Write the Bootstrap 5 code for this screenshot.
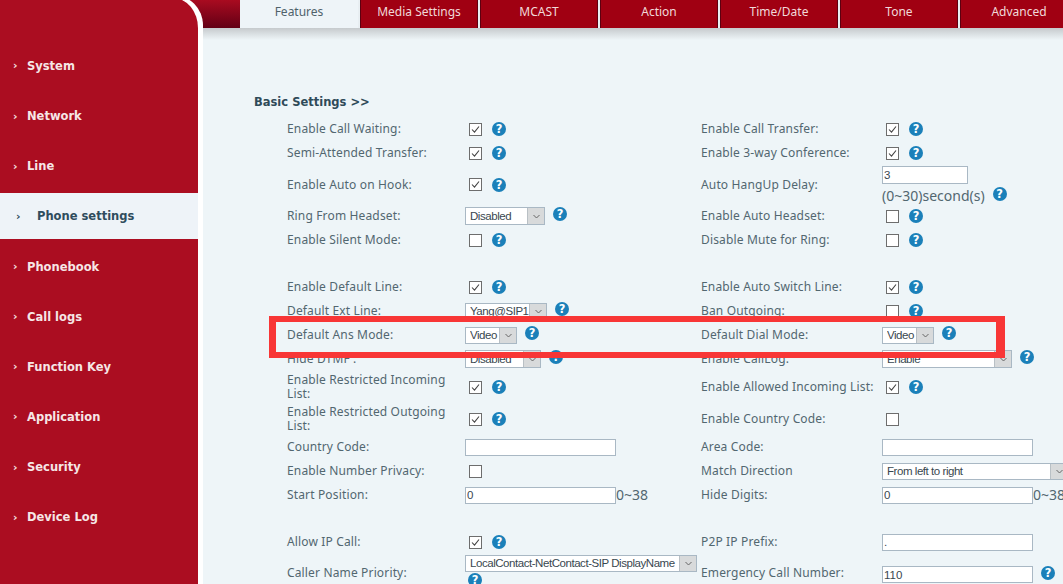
<!DOCTYPE html>
<html lang="en">
<head>
  <meta charset="UTF-8">
  <meta name="viewport" content="width=device-width, initial-scale=1">
  <title>Phone settings</title>
  <link href="https://cdn.jsdelivr.net/npm/bootstrap@5.3.0/dist/css/bootstrap.min.css" rel="stylesheet">
  <style>
    html, body { height: 584px; overflow: hidden; }
    body { font-family: "Noto Sans", "Liberation Sans", sans-serif; font-size: 12px; color: #526770; background: #eef5f8; }
    .page-wrap { width: 1063px; height: 584px; position: relative; overflow: hidden; }

    /* sidebar */
    .side-bar { width: 203px; height: 590px; margin-top: -2px; background: #ab0d21; border-right: 5px solid #fff; border-top-right-radius: 30px; position: relative; z-index: 2; padding-top: 42px; box-shadow: 0 -3px 0 #fff; }
    .side-item { height: 50.2px; display: flex; align-items: center; padding: 3px 0 0 13px; color: #f6e6e6; font-family: "DejaVu Sans", sans-serif; font-weight: 700; font-size: 11.5px; text-decoration: none; }
    .side-item .chev { width: 14px; font-size: 11px; }
    .side-item.on { background: #eef3f8; color: #2f4c5d; height: 46px; margin: 2px 0; padding-left: 16px; }
    .side-item.on .chev { width: 21px; }

    /* top tabs */
    .main-col { width: 890px; margin-left: -30px; flex: none; }
    .tab-bar { height: 28px; padding-left: 67px; background: linear-gradient(#a90b20, #630015); }
    .tab-strip { gap: 2px; background: #e8eef2; flex: none; }
    .tab-cell { width: 118px; flex: none; height: 28px; line-height: 24px; text-align: center; background: #a00012; color: #f1d9d9; border-left: 1px solid #5e0010; border-right: 1px solid #5e0010; text-decoration: none; }
    .tab-cell.on { background: #eef4f8; color: #4f626b; border: 0; }
    .shade-bar { height: 12px; margin-left: 30px; background: linear-gradient(#c6cacd, #eef5f8); }

    /* settings */
    .set-area { margin-left: 30px; padding-top: 53px; }
    .set-title { margin-left: 51px; height: 24px; line-height: 18px; font-family: "DejaVu Sans", sans-serif; font-weight: 700; font-size: 11.5px; color: #2f4a58; }
    .set-row { height: 24px; margin-left: 84px; }
    .row-39 { height: 39px; }
    .row-32 { height: 32px; }
    .row-40 { height: 40px; }
    .set-gap { height: 23px; }
    .set-left { width: 414px; flex: none; }
    .set-label { width: 178px; flex: none; line-height: 14px; letter-spacing: .15px; }
    .set-right .set-label { width: 181px; }
    .set-ctl { flex: none; white-space: nowrap; }
    .note-txt { font-size: 14px; line-height: 16px; }
    .note-line { margin-top: 4px; }
    .top-1 { margin-top: 1px; }

    .chk-box.form-check-input { width: 13px; height: 13px; margin: 0 0 0 4px; border: 1px solid #6d6d6d; border-radius: 0; background-color: #fff; flex: none; }
    .chk-box.form-check-input:checked { background-color: #fff; border-color: #6d6d6d; background-image: url("data:image/svg+xml,%3csvg xmlns='http://www.w3.org/2000/svg' viewBox='0 0 13 13'%3e%3cpath fill='none' stroke='%23444' stroke-width='1.1' d='M3 6.5l2.5 2.7L10 3.5'/%3e%3c/svg%3e"); background-size: 13px 13px; }
    .help-dot { width: 14px; height: 14px; border-radius: 50%; background: #1b80b9; color: #fff; font: 700 11.5px/14px "DejaVu Sans", sans-serif; text-align: center; flex: none; margin-left: 10px; }
    .help-up { margin-top: -4px; margin-left: 8px; }
    .help-under { display: block; margin: 1px 0 0 3px; }

    .sel-box { height: 17px; border: 1px solid #a9b8c4; background: #fff; display: flex; flex: none; }
    .sel-tall { height: 18px; }
    .sel-box select { flex: 1; min-width: 0; appearance: none; border: 0; outline: 0; background: transparent; padding: 0 0 0 4px; font: 11.5px/15px "Liberation Sans", sans-serif; letter-spacing: -.45px; color: #39474f; }
    .sel-arrow { width: 17px; flex: none; background: #d8dadb; border-left: 1px solid #b9c0c5; display: flex; align-items: center; justify-content: center; }
    .w-52 { width: 52px; }
    .w-76 { width: 76px; }
    .w-80 { width: 80px; }
    .w-82 { width: 82px; }
    .w-130 { width: 130px; }
    .w-232 { width: 232px; }
    .w-186 { width: 186px; }

    .txt-in.form-control { width: 151px; height: 17px; min-height: 0; padding: 0 1px; border: 1px solid #a9b8c4; border-radius: 0; background: #fff; font: 11.5px/15px "Liberation Sans", sans-serif; color: #39474f; box-shadow: none; flex: none; }
    .txt-short.form-control { width: 86px; height: 18px; }

    .red-mark { position: absolute; left: 269px; top: 316px; width: 736px; height: 42px; border: 6px solid #f83636; border-left-width: 7px; border-right-width: 9px; z-index: 3; pointer-events: none; }
  </style>
</head>
<body>
  <div class="page-wrap d-flex">

    <!-- left menu -->
    <nav class="side-bar flex-shrink-0">
      <a class="side-item" href="#"><span class="chev">›</span>System</a>
      <a class="side-item" href="#"><span class="chev">›</span>Network</a>
      <a class="side-item" href="#"><span class="chev">›</span>Line</a>
      <a class="side-item on" href="#"><span class="chev">›</span>Phone settings</a>
      <a class="side-item" href="#"><span class="chev">›</span>Phonebook</a>
      <a class="side-item" href="#"><span class="chev">›</span>Call logs</a>
      <a class="side-item" href="#"><span class="chev">›</span>Function Key</a>
      <a class="side-item" href="#"><span class="chev">›</span>Application</a>
      <a class="side-item" href="#"><span class="chev">›</span>Security</a>
      <a class="side-item" href="#"><span class="chev">›</span>Device Log</a>
    </nav>

    <div class="main-col">
      <!-- tabs -->
      <div class="tab-bar d-flex">
        <div class="tab-strip d-flex">
          <a class="tab-cell on" href="#">Features</a>
          <a class="tab-cell" href="#">Media Settings</a>
          <a class="tab-cell" href="#">MCAST</a>
          <a class="tab-cell" href="#">Action</a>
          <a class="tab-cell" href="#">Time/Date</a>
          <a class="tab-cell" href="#">Tone</a>
          <a class="tab-cell" href="#">Advanced</a>
        </div>
      </div>
      <div class="shade-bar"></div>

      <div class="set-area">
        <div class="set-title">Basic Settings &gt;&gt;</div>

        <div class="set-row d-flex">
          <div class="set-left d-flex align-items-center"><div class="set-label">Enable Call Waiting:</div><div class="set-ctl d-flex align-items-center"><input class="form-check-input chk-box" type="checkbox" checked><span class="help-dot">?</span></div></div>
          <div class="set-right d-flex align-items-center"><div class="set-label">Enable Call Transfer:</div><div class="set-ctl d-flex align-items-center"><input class="form-check-input chk-box" type="checkbox" checked><span class="help-dot">?</span></div></div>
        </div>
        <div class="set-row d-flex">
          <div class="set-left d-flex align-items-center"><div class="set-label">Semi-Attended Transfer:</div><div class="set-ctl d-flex align-items-center"><input class="form-check-input chk-box" type="checkbox" checked><span class="help-dot">?</span></div></div>
          <div class="set-right d-flex align-items-center"><div class="set-label">Enable 3-way Conference:</div><div class="set-ctl d-flex align-items-center"><input class="form-check-input chk-box" type="checkbox" checked><span class="help-dot">?</span></div></div>
        </div>
        <div class="set-row row-39 d-flex">
          <div class="set-left d-flex align-items-center"><div class="set-label">Enable Auto on Hook:</div><div class="set-ctl d-flex align-items-center"><input class="form-check-input chk-box" type="checkbox" checked><span class="help-dot">?</span></div></div>
          <div class="set-right d-flex align-items-center"><div class="set-label">Auto HangUp Delay:</div><div class="set-ctl">
            <input class="form-control txt-in txt-short" type="text" value="3">
            <div class="d-flex align-items-center note-txt note-line">(0~30)second(s)<span class="help-dot help-up">?</span></div>
          </div></div>
        </div>
        <div class="set-row d-flex">
          <div class="set-left d-flex align-items-center"><div class="set-label">Ring From Headset:</div><div class="set-ctl d-flex align-items-center"><div class="sel-box sel-tall w-80"><select><option>Disabled</option></select><span class="sel-arrow"><svg width="7" height="5" viewBox="0 0 7 5"><path d="M.5 1l3 3 3-3" fill="none" stroke="#666"/></svg></span></div><span class="help-dot help-up">?</span></div></div>
          <div class="set-right d-flex align-items-center"><div class="set-label">Enable Auto Headset:</div><div class="set-ctl d-flex align-items-center"><input class="form-check-input chk-box" type="checkbox"><span class="help-dot">?</span></div></div>
        </div>
        <div class="set-row d-flex">
          <div class="set-left d-flex align-items-center"><div class="set-label">Enable Silent Mode:</div><div class="set-ctl d-flex align-items-center"><input class="form-check-input chk-box" type="checkbox"><span class="help-dot">?</span></div></div>
          <div class="set-right d-flex align-items-center"><div class="set-label">Disable Mute for Ring:</div><div class="set-ctl d-flex align-items-center"><input class="form-check-input chk-box" type="checkbox"><span class="help-dot">?</span></div></div>
        </div>

        <div class="set-gap"></div>

        <div class="set-row d-flex">
          <div class="set-left d-flex align-items-center"><div class="set-label">Enable Default Line:</div><div class="set-ctl d-flex align-items-center"><input class="form-check-input chk-box" type="checkbox" checked><span class="help-dot">?</span></div></div>
          <div class="set-right d-flex align-items-center"><div class="set-label">Enable Auto Switch Line:</div><div class="set-ctl d-flex align-items-center"><input class="form-check-input chk-box" type="checkbox" checked><span class="help-dot">?</span></div></div>
        </div>
        <div class="set-row d-flex">
          <div class="set-left d-flex align-items-center"><div class="set-label">Default Ext Line:</div><div class="set-ctl d-flex align-items-center"><div class="sel-box w-82"><select><option>Yang@SIP1</option></select><span class="sel-arrow"><svg width="7" height="5" viewBox="0 0 7 5"><path d="M.5 1l3 3 3-3" fill="none" stroke="#666"/></svg></span></div><span class="help-dot help-up">?</span></div></div>
          <div class="set-right d-flex align-items-center"><div class="set-label">Ban Outgoing:</div><div class="set-ctl d-flex align-items-center"><input class="form-check-input chk-box" type="checkbox"><span class="help-dot">?</span></div></div>
        </div>
        <div class="set-row d-flex">
          <div class="set-left d-flex align-items-center"><div class="set-label">Default Ans Mode:</div><div class="set-ctl d-flex align-items-center"><div class="sel-box w-52"><select><option>Video</option></select><span class="sel-arrow"><svg width="7" height="5" viewBox="0 0 7 5"><path d="M.5 1l3 3 3-3" fill="none" stroke="#666"/></svg></span></div><span class="help-dot help-up">?</span></div></div>
          <div class="set-right d-flex align-items-center"><div class="set-label">Default Dial Mode:</div><div class="set-ctl d-flex align-items-center"><div class="sel-box w-52"><select><option>Video</option></select><span class="sel-arrow"><svg width="7" height="5" viewBox="0 0 7 5"><path d="M.5 1l3 3 3-3" fill="none" stroke="#666"/></svg></span></div><span class="help-dot help-up">?</span></div></div>
        </div>
        <div class="set-row d-flex">
          <div class="set-left d-flex align-items-center"><div class="set-label">Hide DTMF :</div><div class="set-ctl d-flex align-items-center"><div class="sel-box sel-tall w-76"><select><option>Disabled</option></select><span class="sel-arrow"><svg width="7" height="5" viewBox="0 0 7 5"><path d="M.5 1l3 3 3-3" fill="none" stroke="#666"/></svg></span></div><span class="help-dot help-up">?</span></div></div>
          <div class="set-right d-flex align-items-center"><div class="set-label">Enable CallLog:</div><div class="set-ctl d-flex align-items-center"><div class="sel-box sel-tall w-130"><select><option>Enable</option></select><span class="sel-arrow"><svg width="7" height="5" viewBox="0 0 7 5"><path d="M.5 1l3 3 3-3" fill="none" stroke="#666"/></svg></span></div><span class="help-dot help-up">?</span></div></div>
        </div>
        <div class="set-row row-32 d-flex">
          <div class="set-left d-flex align-items-center"><div class="set-label">Enable Restricted Incoming List:</div><div class="set-ctl d-flex align-items-center"><input class="form-check-input chk-box" type="checkbox" checked><span class="help-dot">?</span></div></div>
          <div class="set-right d-flex align-items-center"><div class="set-label">Enable Allowed Incoming List:</div><div class="set-ctl d-flex align-items-center"><input class="form-check-input chk-box" type="checkbox" checked><span class="help-dot">?</span></div></div>
        </div>
        <div class="set-row row-32 d-flex">
          <div class="set-left d-flex align-items-center"><div class="set-label">Enable Restricted Outgoing List:</div><div class="set-ctl d-flex align-items-center"><input class="form-check-input chk-box" type="checkbox" checked><span class="help-dot">?</span></div></div>
          <div class="set-right d-flex align-items-center"><div class="set-label">Enable Country Code:</div><div class="set-ctl d-flex align-items-center"><input class="form-check-input chk-box" type="checkbox"></div></div>
        </div>
        <div class="set-row d-flex">
          <div class="set-left d-flex align-items-center"><div class="set-label">Country Code:</div><div class="set-ctl d-flex align-items-center"><input class="form-control txt-in" type="text"></div></div>
          <div class="set-right d-flex align-items-center"><div class="set-label">Area Code:</div><div class="set-ctl d-flex align-items-center"><input class="form-control txt-in" type="text"></div></div>
        </div>
        <div class="set-row d-flex">
          <div class="set-left d-flex align-items-center"><div class="set-label">Enable Number Privacy:</div><div class="set-ctl d-flex align-items-center"><input class="form-check-input chk-box" type="checkbox"></div></div>
          <div class="set-right d-flex align-items-center"><div class="set-label">Match Direction</div><div class="set-ctl d-flex align-items-center"><div class="sel-box w-186"><select><option>From left to right</option></select><span class="sel-arrow"><svg width="7" height="5" viewBox="0 0 7 5"><path d="M.5 1l3 3 3-3" fill="none" stroke="#666"/></svg></span></div></div></div>
        </div>
        <div class="set-row d-flex">
          <div class="set-left d-flex align-items-center"><div class="set-label">Start Position:</div><div class="set-ctl d-flex align-items-center note-txt"><input class="form-control txt-in" type="text" value="0">0~38</div></div>
          <div class="set-right d-flex align-items-center"><div class="set-label">Hide Digits:</div><div class="set-ctl d-flex align-items-center note-txt"><input class="form-control txt-in" type="text" value="0">0~38</div></div>
        </div>

        <div class="set-gap"></div>

        <div class="set-row d-flex">
          <div class="set-left d-flex align-items-center"><div class="set-label">Allow IP Call:</div><div class="set-ctl d-flex align-items-center"><input class="form-check-input chk-box" type="checkbox" checked><span class="help-dot">?</span></div></div>
          <div class="set-right d-flex align-items-center"><div class="set-label">P2P IP Prefix:</div><div class="set-ctl d-flex align-items-center"><input class="form-control txt-in" type="text" value="."></div></div>
        </div>
        <div class="set-row row-40 d-flex">
          <div class="set-left d-flex"><div class="set-label mt-2 pt-1">Caller Name Priority:</div><div class="set-ctl top-1"><div class="sel-box w-232"><select><option>LocalContact-NetContact-SIP DisplayName</option></select><span class="sel-arrow"><svg width="7" height="5" viewBox="0 0 7 5"><path d="M.5 1l3 3 3-3" fill="none" stroke="#666"/></svg></span></div><span class="help-dot help-under">?</span></div></div>
          <div class="set-right d-flex"><div class="set-label mt-2 pt-1">Emergency Call Number:</div><div class="set-ctl d-flex align-items-center mt-2 pt-1 align-self-start"><input class="form-control txt-in" type="text" value="110"><span class="help-dot help-up">?</span></div></div>
        </div>
      </div>
    </div>

    <!-- annotation drawn over the form -->
    <div class="red-mark"></div>
  </div>
  <script src="https://cdn.jsdelivr.net/npm/bootstrap@5.3.0/dist/js/bootstrap.bundle.min.js"></script>
</body>
</html>
